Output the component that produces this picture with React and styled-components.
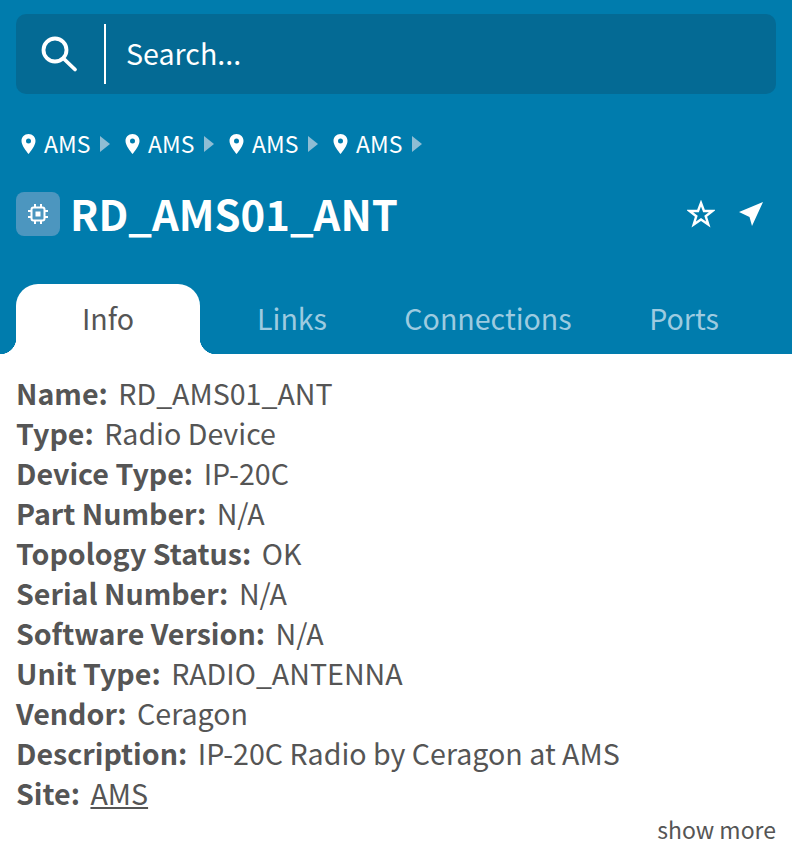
import styled, { createGlobalStyle } from "styled-components";

const Global = createGlobalStyle`
  body {
    margin: 0;
    background: #fff;
    font-family: "Noto Sans CJK SC", "Noto Sans", sans-serif;
  }
`;

const Page = styled.div`
  width: 792px;
  height: 860px;
  overflow: hidden;
`;
const Header = styled.header`
  background: #007cad;
  height: 354px;
  padding: 14px 16px 0;
  box-sizing: border-box;
  display: flex;
  flex-direction: column;
`;
const SearchBar = styled.div`
  height: 80px;
  background: #046a94;
  border-radius: 10px;
  display: flex;
  align-items: center;
`;
const SearchIcon = styled.div`
  width: 90px;
  height: 60px;
  display: flex;
  align-items: center;
  justify-content: center;
  border-right: 2px solid #fff;
  box-sizing: border-box;
  padding-right: 2px;
`;
const SearchText = styled.span`
  color: #fff;
  font-size: 28.6px;
  line-height: 40px;
  margin: 0 0 2px 20px;
`;
const Crumbs = styled.nav`
  display: flex;
  align-items: center;
  height: 32px;
  margin-top: 33px;
  padding-left: 5px;
`;
const Crumb = styled.span`
  display: flex;
  align-items: center;
  width: 104px;
  color: #fff;
  font-size: 23px;
  line-height: 32px;
  svg {
    margin: 2px 8px 0 0;
    flex: none;
  }
`;
const Arrow = styled.i`
  width: 0;
  height: 0;
  margin: 2px 0 0 10px;
  border-left: 10px solid #8fbdd4;
  border-top: 8px solid transparent;
  border-bottom: 8px solid transparent;
`;
const TitleRow = styled.div`
  display: flex;
  align-items: center;
  height: 48px;
  margin-top: 31px;
`;
const Badge = styled.div`
  width: 44px;
  height: 44px;
  border-radius: 8px;
  background: #4c96bf;
  display: flex;
  align-items: center;
  justify-content: center;
  margin-right: 10px;
`;
const Title = styled.h1`
  flex: 1;
  margin: 0 0 3px;
  color: #fff;
  font-size: 41.8px;
  font-weight: 700;
  line-height: 48px;
`;
const Actions = styled.div`
  display: flex;
  align-items: center;
  gap: 24px;
  margin-right: 11px;
`;
const Tabs = styled.div`
  display: flex;
  margin-top: auto;
  height: 70px;
`;
const Tab = styled.div`
  position: relative;
  width: ${(p) => p.$width}px;
  padding-bottom: 2px;
  box-sizing: border-box;
  display: flex;
  align-items: center;
  justify-content: center;
  font-size: 28.6px;
  line-height: 40px;
  color: ${(p) => (p.$active ? "#555" : "#9dcbe0")};
  background: ${(p) => (p.$active ? "#fff" : "transparent")};
  border-radius: 22px 22px 0 0;
  ${(p) =>
    p.$active &&
    `
    &::before, &::after {
      content: "";
      position: absolute;
      bottom: 0;
      width: 16px;
      height: 16px;
    }
    &::before {
      left: -16px;
      background: radial-gradient(circle at 0 0, transparent 16px, #fff 16.5px);
    }
    &::after {
      right: -16px;
      background: radial-gradient(circle at 100% 0, transparent 16px, #fff 16.5px);
    }
  `}
`;
const Body = styled.section`
  padding: 19px 16px 0;
  color: #555;
  font-size: 28.6px;
  line-height: 40px;
`;
const Row = styled.div`
  white-space: nowrap;
`;
const Label = styled.b`
  font-weight: 700;
  margin-right: 10.5px;
`;
const SiteLink = styled.a`
  color: #555;
  text-decoration: underline;
`;
const More = styled.div`
  text-align: right;
  font-size: 23px;
  line-height: 32px;
`;

const Pin = () => (
  <svg width="15" height="20" viewBox="0 0 15 20">
    <path
      fillRule="evenodd"
      fill="#fff"
      d="M7.5 0C3.4 0 .5 3 .5 7c0 4.500 5 10.500 7 13 2-2.500 7-8.500 7-13 0-4-2.900-7-7-7zm0 4.600a2.500 2.500 0 1 1 0 5 2.500 2.500 0 0 1 0-5z"
    />
  </svg>
);

const info = [
  ["Name:", "RD_AMS01_ANT"],
  ["Type:", "Radio Device"],
  ["Device Type:", "IP-20C"],
  ["Part Number:", "N/A"],
  ["Topology Status:", "OK"],
  ["Serial Number:", "N/A"],
  ["Software Version:", "N/A"],
  ["Unit Type:", "RADIO_ANTENNA"],
  ["Vendor:", "Ceragon"],
  ["Description:", "IP-20C Radio by Ceragon at AMS"],
];

export default function App() {
  return (
    <Page>
      <Global />
      <Header>
        <SearchBar>
          <SearchIcon>
            <svg width="38" height="38" viewBox="0 0 38 38" fill="none" stroke="#fff" strokeWidth="3.800">
              <circle cx="15" cy="15" r="11.500" />
              <path d="M23.500 23.500 L35 34.500" strokeLinecap="round" />
            </svg>
          </SearchIcon>
          <SearchText>Search...</SearchText>
        </SearchBar>
        <Crumbs>
          {[0, 1, 2, 3].map((i) => (
            <Crumb key={i}>
              <Pin />
              AMS
              <Arrow />
            </Crumb>
          ))}
        </Crumbs>
        <TitleRow>
          <Badge>
            <svg width="22" height="22" viewBox="0 0 22 22" fill="none" stroke="#fff" strokeWidth="2">
              <rect x="4.500" y="4.500" width="13" height="13" rx="2" />
              <rect x="8.500" y="8.500" width="5" height="5" fill="#fff" stroke="none" />
              <path d="M8 1v3M14 1v3M8 18v3M14 18v3M1 8h3M1 14h3M18 8h3M18 14h3" />
            </svg>
          </Badge>
          <Title>RD_AMS01_ANT</Title>
          <Actions>
            <svg width="28" height="28" viewBox="0 0 28 28" fill="none" stroke="#fff" strokeWidth="2.400" strokeLinejoin="miter">
              <path d="M14 3l3 8h8.500l-6.800 5.200 2.600 8.300L14 19.500l-7.300 5 2.600-8.300L2.500 11H11z" />
            </svg>
            <svg width="26" height="26" viewBox="0 0 26 26" fill="#fff">
              <path d="M24 1 L0 11 L10.500 16 L13 25 Z" />
            </svg>
          </Actions>
        </TitleRow>
        <Tabs>
          <Tab $active $width={184}>Info</Tab>
          <Tab $width={184}>Links</Tab>
          <Tab $width={208}>Connections</Tab>
          <Tab $width={184}>Ports</Tab>
        </Tabs>
      </Header>
      <Body>
        {info.map(([k, v]) => (
          <Row key={k}>
            <Label>{k}</Label>
            {v}
          </Row>
        ))}
        <Row>
          <Label>Site:</Label>
          <SiteLink href="#">AMS</SiteLink>
        </Row>
        <More>show more</More>
      </Body>
    </Page>
  );
}
